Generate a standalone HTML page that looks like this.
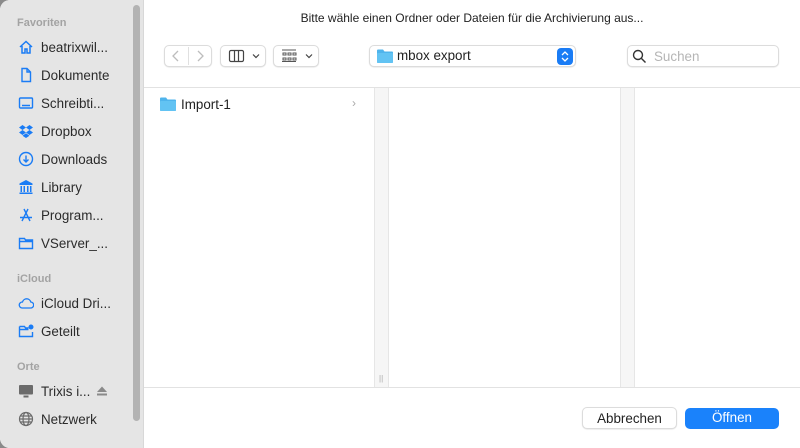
<!DOCTYPE html>
<html><head><meta charset="utf-8"><style>
*{margin:0;padding:0;box-sizing:border-box}
body{width:800px;height:448px;background:#8a8a8a;font-family:"Liberation Sans",sans-serif;overflow:hidden;position:relative}
.win{position:absolute;left:0;top:0;width:800px;height:448px;background:#fff;border-radius:10px 0 0 10px;overflow:hidden}
.side{position:absolute;left:0;top:0;width:144px;height:448px;background:#e5e5e5;border-right:1px solid #d8d8d8}
.sb{position:absolute;left:133px;top:5px;width:7px;height:416px;background:#b3b3b3;border-radius:4px}
.hd{position:absolute;left:17px;font-size:11px;font-weight:bold;color:#a3a3a3}
.it{position:absolute;left:41px;font-size:13.4px;color:#2b2b2b;line-height:16px}
.ic{position:absolute;left:18px;width:16px;height:16px}
.t{position:absolute;left:144px;width:656px;top:11px;text-align:center;font-size:12px;color:#222}
.btn{position:absolute;background:#fff;border:1px solid #dcdcdc;border-radius:5px;box-shadow:0 .5px 1px rgba(0,0,0,.12)}
.vline{position:absolute;top:88px;height:299px;background:#f6f6f6;border-left:1px solid #e6e6e6;border-right:1px solid #e6e6e6}
</style></head><body><div class="win">
<div class="side">
<div class="sb"></div>
<div class="hd" style="top:17px">Favoriten</div>
<svg class="ic" style="top:39px" viewBox="0 0 16 16" fill="none" stroke="#1a7cf5" stroke-width="1.5"><path d="M2 8L8 2.5 14 8M4 7v7h3v-4h2v4h3V7"/></svg><div class="it" style="top:40px">beatrixwil...</div>
<svg class="ic" style="top:67px" viewBox="0 0 16 16" fill="none" stroke="#1a7cf5" stroke-width="1.4"><path d="M4 1.5h5l3.5 3.5v9.5H4z M9 1.5V5h3.5"/></svg><div class="it" style="top:68px">Dokumente</div>
<svg class="ic" style="top:95px" viewBox="0 0 16 16" fill="none" stroke="#1a7cf5" stroke-width="1.4"><rect x="1.5" y="3" width="13" height="10" rx="1"/><path d="M4 10.5h8"/></svg><div class="it" style="top:96px">Schreibti...</div>
<svg class="ic" style="top:123px" viewBox="0 0 16 16" fill="#1a7cf5"><path d="M4.5 2L1 4.5 4.5 7 8 4.5zM11.5 2L8 4.5 11.5 7 15 4.5zM4.5 7L1 9.5 4.5 12 8 9.5zM11.5 7L8 9.5 11.5 12 15 9.5zM4.5 12.7L8 15l3.5-2.3L8 10.3z"/></svg><div class="it" style="top:124px">Dropbox</div>
<svg class="ic" style="top:151px" viewBox="0 0 16 16" fill="none" stroke="#1a7cf5" stroke-width="1.4"><circle cx="8" cy="8" r="6.5"/><path d="M8 4.5v6M5.5 8.5L8 11l2.5-2.5"/></svg><div class="it" style="top:152px">Downloads</div>
<svg class="ic" style="top:179px" viewBox="0 0 16 16" fill="#1a7cf5"><path d="M8 1L1.5 4.5V6h13V4.5z"/><rect x="2.5" y="7" width="1.5" height="6"/><rect x="5.5" y="7" width="1.5" height="6"/><rect x="9" y="7" width="1.5" height="6"/><rect x="12" y="7" width="1.5" height="6"/><rect x="1.5" y="13.5" width="13" height="1.5"/></svg><div class="it" style="top:180px">Library</div>
<svg class="ic" style="top:207px" viewBox="0 0 16 16" fill="none" stroke="#1a7cf5" stroke-width="1.4"><path d="M6 2l6 12M10 2L4 14M2 10.5h12"/></svg><div class="it" style="top:208px">Program...</div>
<svg class="ic" style="top:235px" viewBox="0 0 16 16" fill="none" stroke="#1a7cf5" stroke-width="1.4"><path d="M1.5 3.5h5l1 1.5h7v8.5h-13z M1.5 6.5h13"/></svg><div class="it" style="top:236px">VServer_...</div>
<div class="hd" style="top:273px">iCloud</div>
<svg class="ic" style="top:295px" viewBox="0 0 16 16" fill="none" stroke="#1a7cf5" stroke-width="1.3"><path d="M4 13h8.5a3 3 0 0 0 .3-6A4.3 4.3 0 0 0 4.5 7 3 3 0 0 0 4 13z"/></svg><div class="it" style="top:296px">iCloud Dri...</div>
<svg class="ic" style="top:323px" viewBox="0 0 16 16" fill="none" stroke="#1a7cf5" stroke-width="1.4"><path d="M1.5 3.5h5l1 1.5h3 M14.5 9v4.5h-13v-10 M1.5 6.5h9"/><circle cx="13" cy="4" r="2.5" fill="#1a7cf5" stroke="none"/></svg><div class="it" style="top:324px">Geteilt</div>
<div class="hd" style="top:361px">Orte</div>
<svg class="ic" style="top:383px" viewBox="0 0 16 16" fill="#6b6b6b"><rect x="1" y="2" width="14" height="9.5" rx="1"/><rect x="5.5" y="12.5" width="5" height="2"/></svg><div class="it" style="top:384px">Trixis i...</div>
<svg style="position:absolute;left:96px;top:385px" width="12" height="12" viewBox="0 0 12 12" fill="#8a8a8a"><path d="M6 1.5L11 7H1z"/><rect x="1" y="8.5" width="10" height="2"/></svg>
<svg class="ic" style="top:411px" viewBox="0 0 16 16" fill="none" stroke="#6b6b6b" stroke-width="1.2"><circle cx="8" cy="8" r="6.5"/><ellipse cx="8" cy="8" rx="3" ry="6.5"/><path d="M1.5 8h13M2.5 5h11M2.5 11h11"/></svg><div class="it" style="top:412px">Netzwerk</div>
</div>
<div class="t">Bitte wähle einen Ordner oder Dateien für die Archivierung aus...</div>
<div class="btn" style="left:164px;top:45px;width:48px;height:22px"></div>
<div style="position:absolute;left:188px;top:47px;width:1px;height:18px;background:#e0e0e0"></div>
<svg style="position:absolute;left:164px;top:45px" width="48" height="22" fill="none" stroke="#bdbdbd" stroke-width="1.3"><path d="M14 6l-5 5 5 5M34 6l5 5-5 5"/></svg>
<div class="btn" style="left:220px;top:45px;width:46px;height:22px"></div>
<svg style="position:absolute;left:220px;top:45px" width="46" height="22" fill="none" stroke="#444" stroke-width="1.2"><rect x="9.5" y="5.5" width="14" height="11" rx="1.5"/><path d="M14.5 5.5v11M18.5 5.5v11M33 9.5l3 3 3-3"/></svg>
<div class="btn" style="left:273px;top:45px;width:46px;height:22px"></div>
<svg style="position:absolute;left:273px;top:45px" width="46" height="22" fill="none" stroke="#555" stroke-width="1"><path d="M9 5h14M10 8h3v2h-3zM15 8h3v2h-3zM20 8h3v2h-3zM10 13h3v2h-3zM15 13h3v2h-3zM20 13h3v2h-3zM9 16.5h14"/><path d="M33 9.5l3 3 3-3" stroke="#444" stroke-width="1.2"/></svg>
<div class="btn" style="left:369px;top:45px;width:207px;height:22px"></div>
<svg style="position:absolute;left:377px;top:49px" width="16" height="14"><path d="M0 1.5a1 1 0 0 1 1-1h5l1.5 2H15a1 1 0 0 1 1 1V13a1 1 0 0 1-1 1H1a1 1 0 0 1-1-1z" fill="#4fb4ec"/><rect x="0" y="4" width="16" height="10" rx="1" fill="#62c3f3"/></svg>
<div style="position:absolute;left:397px;top:48px;font-size:13.4px;color:#222">mbox export</div>
<div style="position:absolute;left:557px;top:48px;width:16px;height:17px;background:#1a7cf5;border-radius:4px"></div>
<svg style="position:absolute;left:557px;top:48px" width="16" height="17" fill="none" stroke="#fff" stroke-width="1.3"><path d="M5 7l3-3 3 3M5 10l3 3 3-3"/></svg>
<div class="btn" style="left:627px;top:45px;width:152px;height:22px"></div>
<svg style="position:absolute;left:632px;top:49px" width="15" height="15" fill="none" stroke="#333" stroke-width="1.4"><circle cx="6" cy="6" r="4.5"/><path d="M9.5 9.5l4 4"/></svg>
<div style="position:absolute;left:654px;top:49px;font-size:13.4px;color:#b5b5b5">Suchen</div>
<div style="position:absolute;left:144px;top:87px;width:656px;height:1px;background:#e2e2e2"></div>
<svg style="position:absolute;left:160px;top:97px" width="16" height="14"><path d="M0 1.5a1 1 0 0 1 1-1h5l1.5 2H15a1 1 0 0 1 1 1V13a1 1 0 0 1-1 1H1a1 1 0 0 1-1-1z" fill="#4fb4ec"/><rect x="0" y="4" width="16" height="10" rx="1" fill="#62c3f3"/></svg>
<div style="position:absolute;left:181px;top:97px;font-size:13.4px;color:#222">Import-1</div>
<div style="position:absolute;left:352px;top:96px;font-size:12px;color:#aaa">›</div>
<div class="vline" style="left:374px;width:15px"></div>
<div style="position:absolute;left:379px;top:374px;font-size:8px;color:#aaa">||</div>
<div class="vline" style="left:620px;width:15px"></div>
<div style="position:absolute;left:144px;top:387px;width:656px;height:1px;background:#e2e2e2"></div>
<div class="btn" style="left:582px;top:407px;width:95px;height:22px;text-align:center;font-size:13.4px;line-height:21px;color:#222">Abbrechen</div>
<div style="position:absolute;left:685px;top:408px;width:94px;height:21px;background:#1a82fb;border-radius:5px;text-align:center;font-size:13.4px;line-height:20px;color:#fff">Öffnen</div>
</div></body></html>
